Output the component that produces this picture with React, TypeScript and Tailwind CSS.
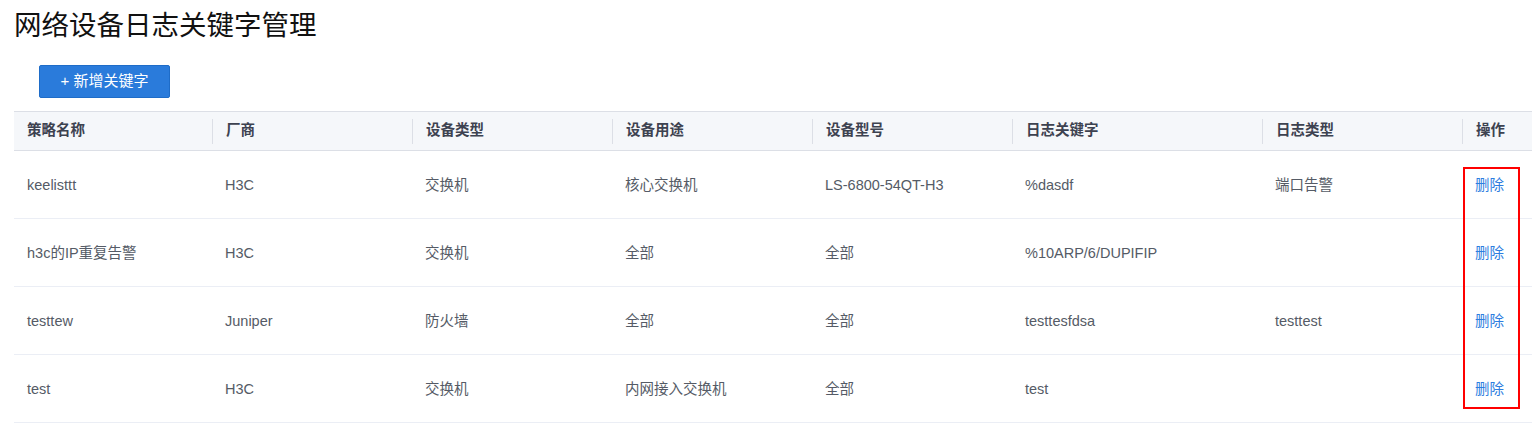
const rows = [
  ['keelisttt', 'H3C', '交换机', '核心交换机', 'LS-6800-54QT-H3', '%dasdf', '端口告警'],
  ['h3c的IP重复告警', 'H3C', '交换机', '全部', '全部', '%10ARP/6/DUPIFIP', ''],
  ['testtew', 'Juniper', '防火墙', '全部', '全部', 'testtesfdsa', 'testtest'],
  ['test', 'H3C', '交换机', '内网接入交换机', '全部', 'test', ''],
];

const headers = ['策略名称', '厂商', '设备类型', '设备用途', '设备型号', '日志关键字', '日志类型', '操作'];
const widths = ['w-[198px]', 'w-[200px]', 'w-[200px]', 'w-[200px]', 'w-[200px]', 'w-[250px]', 'w-[200px]', 'flex-1'];

export default function App() {
  return (
    <div className="relative w-[1532px] h-[427px] overflow-hidden bg-white font-['Liberation_Sans','Noto_Sans_CJK_SC',sans-serif]">
      <h1 className="pl-[14px] pt-[8px] text-[27.5px] leading-[35px] text-[#111]">网络设备日志关键字管理</h1>
      <div className="pl-[39px] pt-[22px]">
        <button className="w-[131px] h-[33px] rounded-[2px] bg-[#2a7bdb] border border-[#1e6cc8] text-white text-[15px]">
          + 新增关键字
        </button>
      </div>
      <div className="ml-[14px] mt-[13px] text-[14.5px]">
        <div className="flex h-[40px] items-center bg-[#f5f7fa] border-y border-[#dcdfe6] text-[#3d4250] font-bold">
          {headers.map((h, i) => (
            <div key={h} className={`${widths[i]} shrink-0 h-[25px] flex items-center pl-[13px] ${i > 0 ? 'border-l border-[#dcdfe6]' : ''}`}>
              {h}
            </div>
          ))}
        </div>
        {rows.map((r, ri) => (
          <div key={ri} className="flex h-[68px] pt-[3px] items-center border-b border-[#ebeef5] text-[#555b66]">
            {r.map((c, ci) => (
              <div key={ci} className={`${widths[ci]} shrink-0 pl-[13px]`}>{c}</div>
            ))}
            <div className="flex-1 pl-[13px] text-[#2d7de0]">删除</div>
          </div>
        ))}
      </div>
      <div className="absolute left-[1463px] top-[167px] w-[57px] h-[242px] border-2 border-[#ff0000]" />
    </div>
  );
}
